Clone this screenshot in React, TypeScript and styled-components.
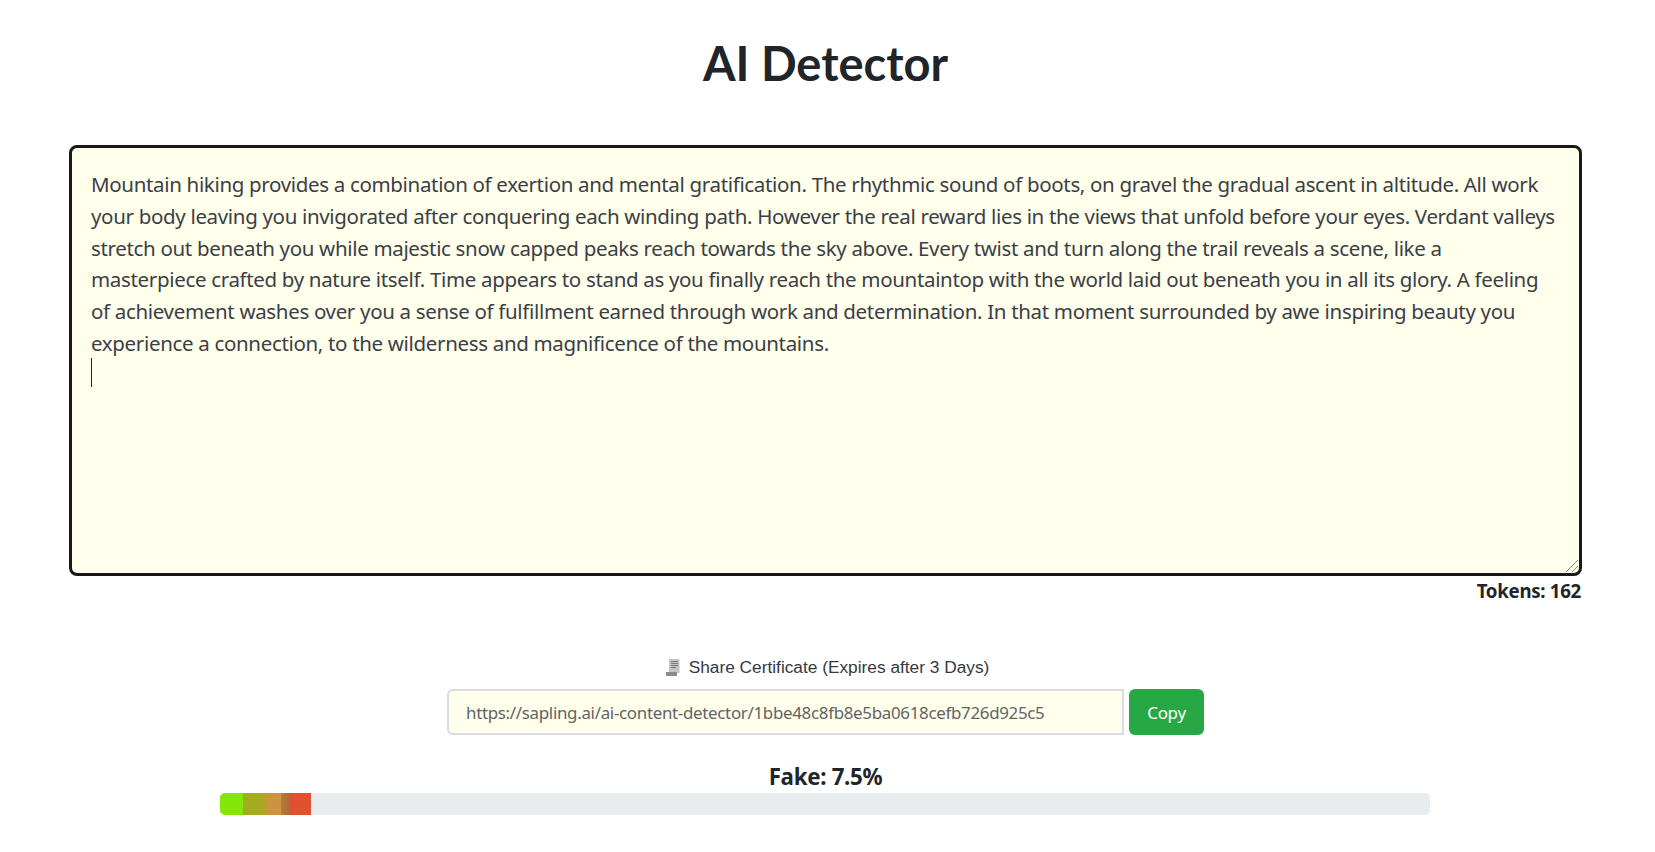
import React from 'react';
import styled, { createGlobalStyle } from 'styled-components';

const Global = createGlobalStyle`
  html, body { margin: 0; padding: 0; background: #fff; }
  body { font-family: "Open Sans", "Liberation Sans", sans-serif; color: #212529; overflow: hidden; }
`;
const Page = styled.main`
  width: 1513px;
  margin: 0 0 0 69px;
  display: flex;
  flex-direction: column;
  align-items: center;
`;
const Title = styled.h1`
  margin: 34px 0 0;
  height: 58px;
  font: 700 47px/58px Lato, sans-serif;
  color: #212529;
`;
const EditorWrap = styled.div`
  position: relative;
  width: 100%;
  height: 431px;
  margin-top: 53px;
`;
const Editor = styled.textarea`
  box-sizing: border-box;
  display: block;
  width: 100%;
  height: 100%;
  padding: 21px 18px 21px 19px;
  border: 3px solid #16181a;
  border-radius: 8px;
  outline: none;
  background: #ffffec;
  color: #3a4046;
  font: 400 20.5px/31.75px "Noto Sans", sans-serif;
  letter-spacing: -0.33px;
  white-space: pre;
  overflow: hidden;
  resize: none;
`;
const Caret = styled.span`
  position: absolute;
  left: 22px;
  top: 213px;
  width: 1px;
  height: 29px;
  background: #212529;
`;
const Grip = styled.svg`
  position: absolute;
  right: 3px;
  bottom: 3px;
  pointer-events: none;
`;
const Tokens = styled.div`
  align-self: flex-end;
  margin-top: 3px;
  padding-right: 1px;
  font: 700 18.7px/23px "Noto Sans", sans-serif;
  letter-spacing: -0.3px;
  color: #212529;
`;
const Share = styled.div`
  margin: 53px 0 0 4px;
  display: flex;
  align-items: center;
  gap: 9px;
  font: 400 17.3px/24px "Liberation Sans", sans-serif;
  color: #343a40;
`;
const CopyRow = styled.div`
  display: flex;
  gap: 5px;
  margin-top: 10px;
`;
const UrlField = styled.input`
  box-sizing: border-box;
  width: 677px;
  height: 46px;
  padding: 0 17px;
  border: 2px solid #d7dde2;
  border-radius: 6px 0 0 6px;
  background: #ffffec;
  color: #5f6468;
  font: 400 16.9px "Noto Sans", sans-serif;
  letter-spacing: -0.3px;
  outline: none;
`;
const CopyButton = styled.button`
  width: 75px;
  height: 46px;
  border: 0;
  border-radius: 6px;
  background: #28a745;
  color: #fff;
  font: 400 17px "Noto Sans", sans-serif;
  letter-spacing: -0.3px;
`;
const Score = styled.div`
  margin-top: 27px;
  font: 700 22.3px/30px "Noto Sans", sans-serif;
  letter-spacing: -0.3px;
  color: #212529;
`;
const Bar = styled.div`
  display: flex;
  width: 1210px;
  height: 22px;
  margin: 1px 2px 0 0;
  border-radius: 5px;
  overflow: hidden;
  background: #e9ecef;
`;
const Segment = styled.div`
  height: 100%;
  flex: none;
`;

const lines = [
  'Mountain hiking provides a combination of exertion and mental gratification. The rhythmic sound of boots, on gravel the gradual ascent in altitude. All work',
  'your body leaving you invigorated after conquering each winding path. However the real reward lies in the views that unfold before your eyes. Verdant valleys',
  'stretch out beneath you while majestic snow capped peaks reach towards the sky above. Every twist and turn along the trail reveals a scene, like a',
  'masterpiece crafted by nature itself. Time appears to stand as you finally reach the mountaintop with the world laid out beneath you in all its glory. A feeling',
  'of achievement washes over you a sense of fulfillment earned through work and determination. In that moment surrounded by awe inspiring beauty you',
  'experience a connection, to the wilderness and magnificence of the mountains.',
  '',
];

const segments = [
  { w: 23, c: '#85e60a' },
  { w: 22, c: 'linear-gradient(90deg, #a5ab1e 80%, #b9a02c)' },
  { w: 16, c: 'linear-gradient(90deg, #b9a02c, #cc9340 30%)' },
  { w: 9, c: 'linear-gradient(90deg, #b87a3a, #a86c3a)' },
  { w: 21, c: '#de5030' },
];

const Scroll = () => (
  <svg width="14" height="17" viewBox="0 0 14 17" aria-hidden="true">
    <path d="M3 0h10.5v14H3z" fill="#c4c4c4" />
    <path d="M5 2.5h7M5 4.5h7M5 6.5h7M5 8.5h5" stroke="#7a7a7a" strokeWidth="1" />
    <path d="M0 13h11v4H0z" fill="#8c8c8c" />
  </svg>
);

export default function App() {
  return (
    <Page>
      <Global />
      <Title>AI Detector</Title>
      <EditorWrap>
        <Editor defaultValue={lines.join('\n')} spellCheck={false} />
        <Caret />
        <Grip width="14" height="14" viewBox="0 0 14 14" aria-hidden="true">
          <path d="M1 13 13 1M7 13l6-6" stroke="#8a8a8a" strokeWidth="1" fill="none" />
        </Grip>
      </EditorWrap>
      <Tokens>Tokens: 162</Tokens>
      <Share>
        <Scroll />
        <span>Share Certificate (Expires after 3 Days)</span>
      </Share>
      <CopyRow>
        <UrlField readOnly value="https://sapling.ai/ai-content-detector/1bbe48c8fb8e5ba0618cefb726d925c5" />
        <CopyButton>Copy</CopyButton>
      </CopyRow>
      <Score>Fake: 7.5%</Score>
      <Bar>
        {segments.map((s) => (
          <Segment key={s.w + s.c} style={{ width: s.w, background: s.c }} />
        ))}
      </Bar>
    </Page>
  );
}
